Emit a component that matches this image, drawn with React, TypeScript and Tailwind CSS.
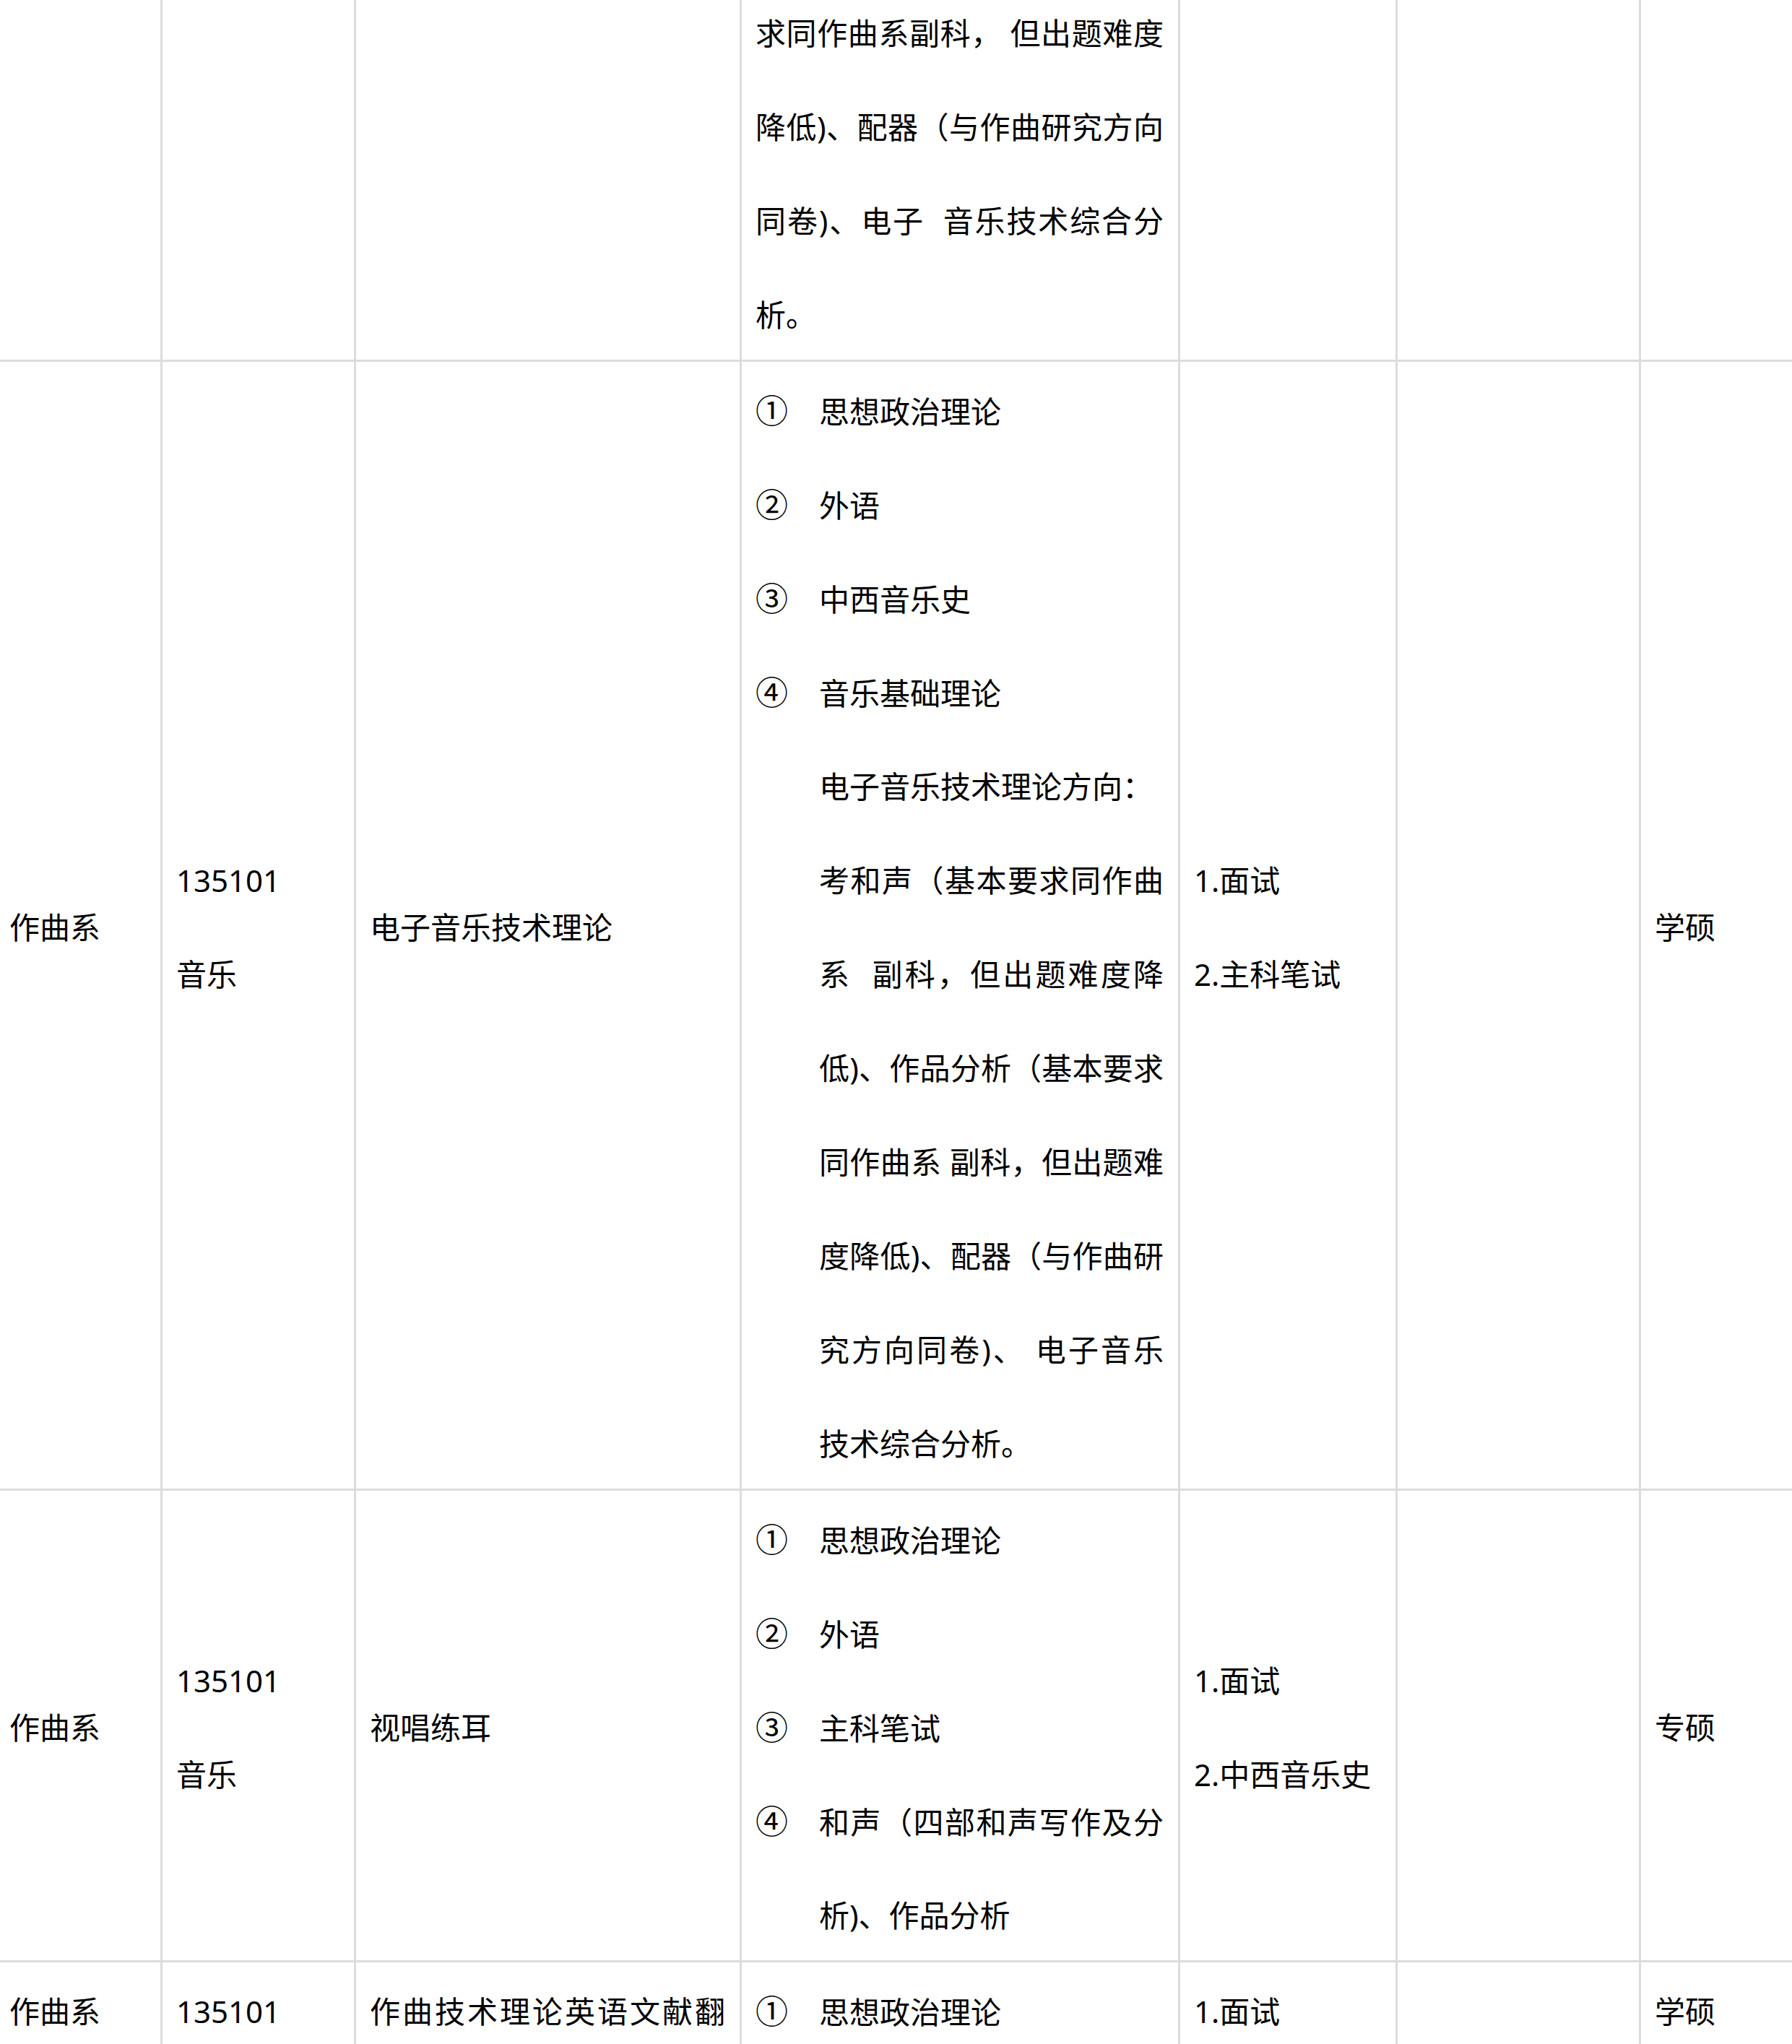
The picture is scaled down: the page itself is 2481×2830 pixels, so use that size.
import React from "react";

type P = { children?: React.ReactNode };

const ROW =
  "grid grid-cols-[222px_268px_534px_607px_301px_337px_1fr] border-b-[3px] border-[#dcdcdc]";
const CELL = "border-l-[3px] border-[#dcdcdc] flex flex-col pl-[19px] pr-[20px]";

function Line({ children, j }: P & { j?: boolean }) {
  return (
    <div
      className={
        j
          ? "h-[130px] whitespace-nowrap text-justify [text-align-last:justify]"
          : "h-[130px] whitespace-nowrap"
      }
    >
      {children}
    </div>
  );
}

function Ind({ children, j }: P & { j?: boolean }) {
  return (
    <div
      className={
        j
          ? "h-[130px] pl-[88px] whitespace-nowrap text-justify [text-align-last:justify]"
          : "h-[130px] pl-[88px] whitespace-nowrap"
      }
    >
      {children}
    </div>
  );
}

function Circ({ n }: { n: string }) {
  return <span className="w-[88px] shrink-0 text-[45px]">{n}</span>;
}

function Num({ n, children }: P & { n: string }) {
  return (
    <div className="h-[130px] flex items-baseline whitespace-nowrap">
      <Circ n={n} />
      <span>{children}</span>
    </div>
  );
}

function Cell({ children, first, top }: P & { first?: boolean; top?: boolean }) {
  return (
    <div
      className={
        first
          ? top
            ? "flex flex-col justify-start pl-[13px] pr-[10px]"
            : "flex flex-col justify-center pl-[13px] pr-[10px]"
          : top
          ? CELL + " justify-start"
          : CELL + " justify-center"
      }
    >
      {children}
    </div>
  );
}

export default function App() {
  return (
    <div className="w-[2481px] h-[2830px] overflow-hidden bg-white text-black text-[42px] leading-[136px] font-['Noto_Sans','Noto_Sans_CJK_SC',sans-serif]">
      <div className="mt-[-22px]">
        {/* Row A (continued from previous page) */}
        <div className={ROW}>
          <Cell first />
          <Cell />
          <Cell />
          <Cell>
            <Line j>求同作曲系副科，{"\u00a0"}但出题难度</Line>
            <Line j>降低)、配器（与作曲研究方向</Line>
            <Line j>同卷)、电子{"\u00a0\u00a0"}音乐技术综合分</Line>
            <Line>析。</Line>
          </Cell>
          <Cell />
          <Cell />
          <Cell />
        </div>

        {/* Row B */}
        <div className={ROW}>
          <Cell first>
            <Line>作曲系</Line>
          </Cell>
          <Cell>
            <Line>135101</Line>
            <Line>音乐</Line>
          </Cell>
          <Cell>
            <Line>电子音乐技术理论</Line>
          </Cell>
          <Cell>
            <Num n="①">思想政治理论</Num>
            <Num n="②">外语</Num>
            <Num n="③">中西音乐史</Num>
            <Num n="④">音乐基础理论</Num>
            <Ind>电子音乐技术理论方向：</Ind>
            <Ind j>考和声（基本要求同作曲</Ind>
            <Ind j>系{"\u00a0\u00a0"}副科，但出题难度降</Ind>
            <Ind j>低)、作品分析（基本要求</Ind>
            <Ind j>同作曲系{"\u00a0"}副科，但出题难</Ind>
            <Ind j>度降低)、配器（与作曲研</Ind>
            <Ind j>究方向同卷)、{"\u00a0"}电子音乐</Ind>
            <Ind>技术综合分析。</Ind>
          </Cell>
          <Cell>
            <Line>1.面试</Line>
            <Line>2.主科笔试</Line>
          </Cell>
          <Cell />
          <Cell>
            <Line>学硕</Line>
          </Cell>
        </div>

        {/* Row C */}
        <div className={ROW}>
          <Cell first>
            <Line>作曲系</Line>
          </Cell>
          <Cell>
            <Line>135101</Line>
            <Line>音乐</Line>
          </Cell>
          <Cell>
            <Line>视唱练耳</Line>
          </Cell>
          <Cell>
            <Num n="①">思想政治理论</Num>
            <Num n="②">外语</Num>
            <Num n="③">主科笔试</Num>
            <div className="h-[130px] flex items-baseline whitespace-nowrap">
              <Circ n="④" />
              <span className="flex-1 text-justify [text-align-last:justify]">和声（四部和声写作及分</span>
            </div>
            <Ind>析)、作品分析</Ind>
          </Cell>
          <Cell>
            <Line>1.面试</Line>
            <Line>2.中西音乐史</Line>
          </Cell>
          <Cell />
          <Cell>
            <Line>专硕</Line>
          </Cell>
        </div>

        {/* Row D (continues beyond the visible area) */}
        <div className={ROW}>
          <Cell first top>
            <Line>作曲系</Line>
          </Cell>
          <Cell top>
            <Line>135101</Line>
          </Cell>
          <Cell top>
            <Line j>作曲技术理论英语文献翻</Line>
          </Cell>
          <Cell top>
            <Num n="①">思想政治理论</Num>
          </Cell>
          <Cell top>
            <Line>1.面试</Line>
          </Cell>
          <Cell top />
          <Cell top>
            <Line>学硕</Line>
          </Cell>
        </div>
      </div>
    </div>
  );
}
